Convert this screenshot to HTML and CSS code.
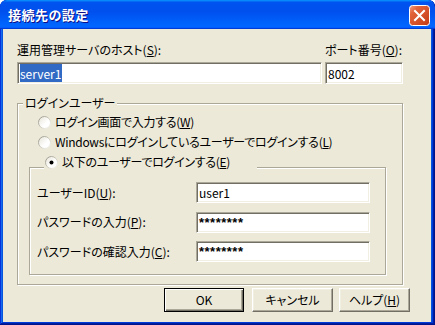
FILE: index.html
```html
<!DOCTYPE html>
<html lang="ja">
<head>
<meta charset="utf-8">
<title>接続先の設定</title>
<link rel="stylesheet" href="styles.css">
</head>
<body>
<div class="window">
  <div class="titlebar">
    <span class="title">接続先の設定</span>
    <div class="close" aria-label="閉じる">
      <svg width="21" height="21" viewBox="0 0 21 21">
        <defs>
          <linearGradient id="cg" x1="0" y1="0" x2="1" y2="1">
            <stop offset="0" stop-color="#F0A58A"/>
            <stop offset="0.25" stop-color="#E2633B"/>
            <stop offset="1" stop-color="#C33A13"/>
          </linearGradient>
        </defs>
        <rect x="0.5" y="0.5" width="20" height="20" rx="3" fill="url(#cg)" stroke="#fff"/>
        <path d="M6 6 L15 15 M15 6 L6 15" stroke="#fff" stroke-width="2" stroke-linecap="square"/>
      </svg>
    </div>
  </div>
  <div class="client">
    <div class="toprow">
      <span class="lbl">運用管理サーバのホスト(<u>S</u>):</span>
      <span class="lbl">ポート番号(<u>O</u>):</span>
      <div class="textbox"><span class="sel">server1</span></div>
      <div class="textbox">8002</div>
    </div>
    <fieldset class="group">
      <legend class="glegend">ログインユーザー</legend>
      <div class="opt first">
        <svg class="radio" width="13" height="13" viewBox="0 0 13 13"><use href="#rad"/></svg>
        <span class="otext">ログイン画面で入力する(<u>W</u>)</span>
      </div>
      <div class="opt">
        <svg class="radio" width="13" height="13" viewBox="0 0 13 13"><use href="#rad"/></svg>
        <span class="otext">Windowsにログインしているユーザーでログインする(<u>L</u>)</span>
      </div>
      <fieldset class="sub">
        <legend class="slegend">
          <span class="opt inl">
            <svg class="radio" width="13" height="13" viewBox="0 0 13 13"><use href="#rad"/><circle cx="6.5" cy="6.5" r="2" fill="#000"/></svg>
            <span class="otext">以下のユーザーでログインする(<u>E</u>)</span>
          </span>
        </legend>
        <div class="form">
          <span class="lbl">ユーザーID(<u>U</u>):</span>
          <div class="textbox sm">user1</div>
          <span class="lbl">パスワードの入力(<u>P</u>):</span>
          <div class="textbox sm pw">********</div>
          <span class="lbl">パスワードの確認入力(<u>C</u>):</span>
          <div class="textbox sm pw">********</div>
        </div>
      </fieldset>
    </fieldset>
    <div class="buttons">
      <div class="btn default w-ok">OK</div>
      <div class="btn w-cancel">キャンセル</div>
      <div class="btn w-help">ヘルプ(<u>H</u>)</div>
    </div>
  </div>
</div>
<svg width="0" height="0" class="defs">
  <defs>
    <linearGradient id="rring" x1="0" y1="0" x2="1" y2="1">
      <stop offset="0" stop-color="#8F8D84"/>
      <stop offset="0.5" stop-color="#C9C6B8"/>
      <stop offset="1" stop-color="#FFFFFF"/>
    </linearGradient>
    <linearGradient id="rfill" x1="0" y1="0" x2="1" y2="1">
      <stop offset="0" stop-color="#E6E3D6"/>
      <stop offset="0.6" stop-color="#FFFFFF"/>
    </linearGradient>
    <g id="rad">
      <circle cx="6.5" cy="6.5" r="6" fill="url(#rfill)" stroke="url(#rring)" stroke-width="1"/>
    </g>
  </defs>
</svg>
</body>
</html>
```
FILE: styles.css
```css
html, body {
  margin: 0;
  padding: 0;
  background: #ffffff;
}
body {
  font-family: "Noto Sans CJK JP", "Noto Sans", sans-serif;
  font-size: 12px;
  font-feature-settings: "palt";
  color: #000;
}
.defs {
  position: absolute;
  width: 0;
  height: 0;
}
.window {
  width: 435px;
  height: 325px;
  box-sizing: border-box;
  display: flex;
  flex-direction: column;
  background: #0855DD;
  border-radius: 7px 7px 0 0;
  overflow: hidden;
  box-shadow: inset -1px -1px #00138c, inset 1px 1px #0831d9, inset -2px -2px #001ea0, inset 2px 2px #166aee, inset -3px -3px #003bda, inset 3px 3px #0855dd;
}
.titlebar {
  height: 29px;
  flex: none;
  display: flex;
  align-items: center;
  justify-content: space-between;
  padding: 0 5px 0 8px;
  background: linear-gradient(180deg, #0997ff, #0053ee 8%, #0050ee 40%, #0066ff 88%, #0066ff 93%, #005bff 95%, #003dd7 96%, #003dd7);
  border-radius: 7px 7px 0 0;
}
.title {
  color: #fff;
  font-weight: bold;
  font-size: 13px;
  line-height: 16px;
  letter-spacing: 0.5px;
  text-shadow: 1px 1px #0f1089;
  margin-top: 1px;
}
.close {
  width: 21px;
  height: 21px;
  margin-top: 2px;
}
.close svg { display: block; }
.client {
  flex: 1;
  margin: 0 4px 3px 3px;
  background: #ECE9D8;
  padding: 14px 28px 0 14px;
  line-height: 14px;
}
u { text-decoration: underline; text-underline-offset: 1px; }
.toprow {
  display: grid;
  grid-template-columns: 305px 78px;
  column-gap: 3px;
  row-gap: 5px;
}
.lbl { white-space: nowrap; }
.textbox {
  height: 22px;
  box-sizing: border-box;
  background: #fff;
  border: 1px solid;
  border-color: #ACA899 #fff #fff #ACA899;
  box-shadow: inset 1px 1px #716F64, inset -1px -1px #F1EFE2;
  padding: 3px 2px 0 2px;
  line-height: 15px;
  white-space: nowrap;
  overflow: hidden;
}
.textbox.sm { height: 21px; padding-top: 2px; }
.textbox.pw { letter-spacing: 0.5px; font-family: "Liberation Sans", sans-serif; font-size: 13px; font-weight: bold; }
.sel {
  background: #316AC5;
  color: #fff;
  padding: 1px 1px 0 0;
}
.group {
  margin: 12px 0 0 0;
  padding: 0;
  border: 1px solid #ACA899;
  box-shadow: inset 1px 1px #fff, 1px 1px #fff;
  min-width: 0;
}
.glegend {
  margin-left: 5px;
  padding: 0 2px;
  line-height: 14px;
  background: #ECE9D8;
}
.opt {
  display: flex;
  align-items: center;
  gap: 4px;
  height: 20px;
  padding-left: 20px;
  white-space: nowrap;
}
.otext { letter-spacing: -0.3px; }
.opt.first { margin-top: 2px; }
.radio { display: block; flex: none; }
.sub {
  margin: 3px 16px 9px 11px;
  padding: 3px 15px 12px 7px;
  border: 1px solid #ACA899;
  box-shadow: inset 1px 1px #fff, 1px 1px #fff;
  min-width: 0;
}
.slegend {
  margin-left: 7px;
  width: 213px;
  box-sizing: border-box;
  padding: 0 0 10px 1px;
  line-height: 14px;
  background: #ECE9D8;
}
.opt.inl {
  height: 14px;
  padding-left: 0;
}
.form {
  display: grid;
  grid-template-columns: 159px 174px;
  row-gap: 8.5px;
  align-items: center;
}
.buttons {
  display: flex;
  justify-content: flex-end;
  margin: 3px -7px 0 0;
}
.btn {
  height: 24px;
  box-sizing: border-box;
  display: flex;
  align-items: center;
  justify-content: center;
  background: #ECE9D8;
  border: 1px solid;
  border-color: #fff #716F64 #716F64 #fff;
  box-shadow: inset -1px -1px #ACA899, inset 1px 1px #F1EFE2;
  line-height: 14px;
}
.btn.default {
  border-color: #000;
  box-shadow: inset 1px 1px #fff, inset -1px -1px #716F64, inset -2px -2px #ACA899;
}
.w-ok { width: 80px; }
.w-cancel { width: 81px; margin-left: 8px; }
.w-help { width: 71px; margin-left: 6px; }
```
